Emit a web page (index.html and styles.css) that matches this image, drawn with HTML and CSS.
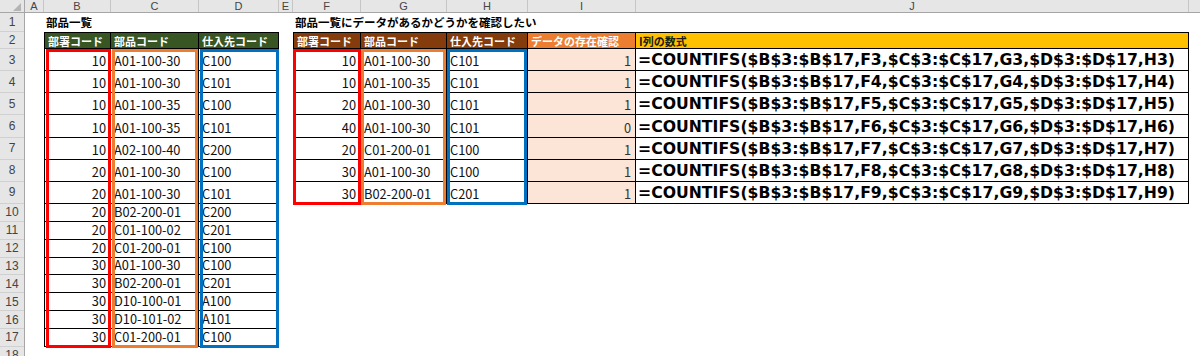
FILE: index.html
```html
<!DOCTYPE html>
<html lang="ja">
<head>
<meta charset="utf-8">
<title>部品一覧</title>
<link rel="stylesheet" href="styles.css">
</head>
<body>
<div class="sheet">
  <div class="colhead">
    <div class="corner"><span class="tri"></span></div>
    <div>A</div><div>B</div><div>C</div><div>D</div><div>E</div><div>F</div><div>G</div><div>H</div><div>I</div><div>J</div><div class="last"></div>
  </div>
  <div class="main">
    <div class="rowhead">
      <div>1</div><div>2</div><div>3</div><div>4</div><div>5</div><div>6</div><div>7</div><div>8</div><div>9</div><div>10</div><div>11</div><div>12</div><div>13</div><div>14</div><div>15</div><div>16</div><div>17</div><div>18</div>
    </div>
    <div class="stack">
      <div class="cells">
        <!-- row 1 -->
        <div></div><div class="title">部品一覧</div><div></div><div></div><div></div><div class="title">部品一覧にデータがあるかどうかを確認したい</div><div></div><div></div><div></div><div></div><div></div>
        <!-- row 2 -->
        <div></div><div class="h g first">部署コード</div><div class="h g">部品コード</div><div class="h g">仕入先コード</div><div></div><div class="h b first">部署コード</div><div class="h b">部品コード</div><div class="h b">仕入先コード</div><div class="h o">データの存在確認</div><div class="h y">I列の数式</div><div></div>
        <!-- row 3 -->
        <div></div><div class="d n first">10</div><div class="d">A01-100-30</div><div class="d">C100</div><div></div><div class="d n first">10</div><div class="d">A01-100-30</div><div class="d">C101</div><div class="d n pink">1</div><div class="d f">=COUNTIFS($B$3:$B$17,F3,$C$3:$C$17,G3,$D$3:$D$17,H3)</div><div></div>
        <!-- row 4 -->
        <div></div><div class="d n first">10</div><div class="d">A01-100-30</div><div class="d">C101</div><div></div><div class="d n first">10</div><div class="d">A01-100-35</div><div class="d">C101</div><div class="d n pink">1</div><div class="d f">=COUNTIFS($B$3:$B$17,F4,$C$3:$C$17,G4,$D$3:$D$17,H4)</div><div></div>
        <!-- row 5 -->
        <div></div><div class="d n first">10</div><div class="d">A01-100-35</div><div class="d">C100</div><div></div><div class="d n first">20</div><div class="d">A01-100-30</div><div class="d">C101</div><div class="d n pink">1</div><div class="d f">=COUNTIFS($B$3:$B$17,F5,$C$3:$C$17,G5,$D$3:$D$17,H5)</div><div></div>
        <!-- row 6 -->
        <div></div><div class="d n first">10</div><div class="d">A01-100-35</div><div class="d">C101</div><div></div><div class="d n first">40</div><div class="d">A01-100-30</div><div class="d">C101</div><div class="d n pink">0</div><div class="d f">=COUNTIFS($B$3:$B$17,F6,$C$3:$C$17,G6,$D$3:$D$17,H6)</div><div></div>
        <!-- row 7 -->
        <div></div><div class="d n first">10</div><div class="d">A02-100-40</div><div class="d">C200</div><div></div><div class="d n first">20</div><div class="d">C01-200-01</div><div class="d">C100</div><div class="d n pink">1</div><div class="d f">=COUNTIFS($B$3:$B$17,F7,$C$3:$C$17,G7,$D$3:$D$17,H7)</div><div></div>
        <!-- row 8 -->
        <div></div><div class="d n first">20</div><div class="d">A01-100-30</div><div class="d">C100</div><div></div><div class="d n first">30</div><div class="d">A01-100-30</div><div class="d">C100</div><div class="d n pink">1</div><div class="d f">=COUNTIFS($B$3:$B$17,F8,$C$3:$C$17,G8,$D$3:$D$17,H8)</div><div></div>
        <!-- row 9 -->
        <div></div><div class="d n first">20</div><div class="d">A01-100-30</div><div class="d">C101</div><div></div><div class="d n first">30</div><div class="d">B02-200-01</div><div class="d">C201</div><div class="d n pink">1</div><div class="d f">=COUNTIFS($B$3:$B$17,F9,$C$3:$C$17,G9,$D$3:$D$17,H9)</div><div></div>
        <!-- row 10 -->
        <div></div><div class="d n first">20</div><div class="d">B02-200-01</div><div class="d">C200</div><div></div><div></div><div></div><div></div><div></div><div></div><div></div>
        <!-- row 11 -->
        <div></div><div class="d n first">20</div><div class="d">C01-100-02</div><div class="d">C201</div><div></div><div></div><div></div><div></div><div></div><div></div><div></div>
        <!-- row 12 -->
        <div></div><div class="d n first">20</div><div class="d">C01-200-01</div><div class="d">C100</div><div></div><div></div><div></div><div></div><div></div><div></div><div></div>
        <!-- row 13 -->
        <div></div><div class="d n first">30</div><div class="d">A01-100-30</div><div class="d">C100</div><div></div><div></div><div></div><div></div><div></div><div></div><div></div>
        <!-- row 14 -->
        <div></div><div class="d n first">30</div><div class="d">B02-200-01</div><div class="d">C201</div><div></div><div></div><div></div><div></div><div></div><div></div><div></div>
        <!-- row 15 -->
        <div></div><div class="d n first">30</div><div class="d">D10-100-01</div><div class="d">A100</div><div></div><div></div><div></div><div></div><div></div><div></div><div></div>
        <!-- row 16 -->
        <div></div><div class="d n first">30</div><div class="d">D10-101-02</div><div class="d">A101</div><div></div><div></div><div></div><div></div><div></div><div></div><div></div>
        <!-- row 17 -->
        <div></div><div class="d n first">30</div><div class="d">C01-200-01</div><div class="d">C100</div><div></div><div></div><div></div><div></div><div></div><div></div><div></div>
      </div>
      <div class="marks">
        <div class="mk m-b"></div>
        <div class="mk m-c"></div>
        <div class="mk m-d"></div>
        <div class="mk m-f"></div>
        <div class="mk m-g"></div>
        <div class="mk m-h"></div>
      </div>
    </div>
  </div>
</div>
</body>
</html>
```
FILE: styles.css
```css
* { box-sizing: border-box; }

body {
  margin: 0;
  width: 1200px;
  height: 356px;
  overflow: hidden;
  background: #fff;
  font-family: "Noto Sans CJK JP", sans-serif;
  color: #111;
}

.sheet {
  display: flex;
  flex-direction: column;
  height: 356px;
}

/* column letters */
.colhead {
  display: grid;
  grid-template-columns: 25px 19px 67px 88px 80px 14px 68px 86px 81px 108px 553px 1fr;
  height: 13px;
  flex: none;
  background: #e6e6e6;
  border-bottom: 1px solid #a6a6a6;
}
.colhead > div {
  border-right: 1px solid #c6c6c6;
  font: 11px/12px "Liberation Sans", sans-serif;
  color: #444;
  text-align: center;
}
.colhead > .last { border-right: none; }
.colhead > .corner {
  display: flex;
  justify-content: flex-end;
  align-items: flex-end;
  padding: 0 3px 1px 0;
  border-right: 1px solid #a6a6a6;
}
.tri {
  width: 0;
  height: 0;
  border-left: 8px solid transparent;
  border-bottom: 8px solid #b4b4b4;
}

.main {
  display: flex;
  flex: 1;
  overflow: hidden;
}

/* row numbers */
.rowhead {
  width: 25px;
  flex: none;
  display: grid;
  grid-template-rows: 19px 17px repeat(7, 22.14px) repeat(8, 17.875px) 18px;
  background: #e6e6e6;
  border-right: 1px solid #a6a6a6;
}
.rowhead > div {
  border-bottom: 1px solid #d0d0d0;
  display: flex;
  align-items: center;
  justify-content: center;
  font: 12px "Liberation Sans", sans-serif;
  color: #444;
}

/* sheet body: cells and the drawn rectangles share one grid area */
.stack {
  flex: 1;
  display: grid;
}
.cells,
.marks {
  grid-area: 1 / 1;
  display: grid;
  grid-template-columns: 19px 67px 88px 80px 14px 68px 86px 81px 108px 553px 1fr;
  grid-template-rows: 19px 17px repeat(7, 22.14px) repeat(8, 17.875px) 1fr;
}
.marks { pointer-events: none; }

.cells > div {
  display: flex;
  align-items: flex-end;
  white-space: nowrap;
}

.title {
  font-weight: bold;
  font-size: 11.5px;
  line-height: 14px;
  padding: 0 0 3px 2px;
  color: #000;
}

.h {
  align-items: center !important;
  padding: 0 0 0 3px;
  font-size: 11px;
  font-weight: bold;
  color: #fff;
  border-top: 1px solid #000;
  border-right: 1px solid #000;
  border-bottom: 1px solid #000;
}
.h.g { background: #375623; }
.h.b { background: #843c0c; }
.h.o { background: #ed7d31; }
.h.y { background: #ffc000; color: #1a1a1a; }

.first { border-left: 1px solid #000; }

.d {
  border-right: 1px solid #000;
  border-bottom: 1px solid #000;
  font-size: 12.8px;
  line-height: 15px;
  padding: 0 3px 2px 3px;
  color: #111;
}
.d.n { justify-content: flex-end; padding-right: 4px; }
.d.pink { background: #fce4d6; color: #333; }
.d.f {
  font: bold 15.7px/19px "DejaVu Sans", sans-serif;
  padding: 0 0 1px 2px;
  color: #000;
}

/* coloured outlines drawn over the columns */
.mk { border: 3px solid; }
.m-b { grid-column: 2; grid-row: 3 / 18; border-color: #ff0000; margin: 0 0 -1px 2px; }
.m-c { grid-column: 3; grid-row: 3 / 18; border-color: #ed7d31; margin: 0 1px -1px 1px; }
.m-d { grid-column: 4; grid-row: 3 / 18; border-color: #0070c0; margin: 0 0 -1px 1px; }
.m-f { grid-column: 6; grid-row: 3 / 10; border-color: #ff0000; margin: 0 0 -1px 0; }
.m-g { grid-column: 7; grid-row: 3 / 10; border-color: #ed7d31; margin: 0 1px -1px 0; }
.m-h { grid-column: 8; grid-row: 3 / 10; border-color: #0070c0; margin: 0 1px -1px 0; }
```
